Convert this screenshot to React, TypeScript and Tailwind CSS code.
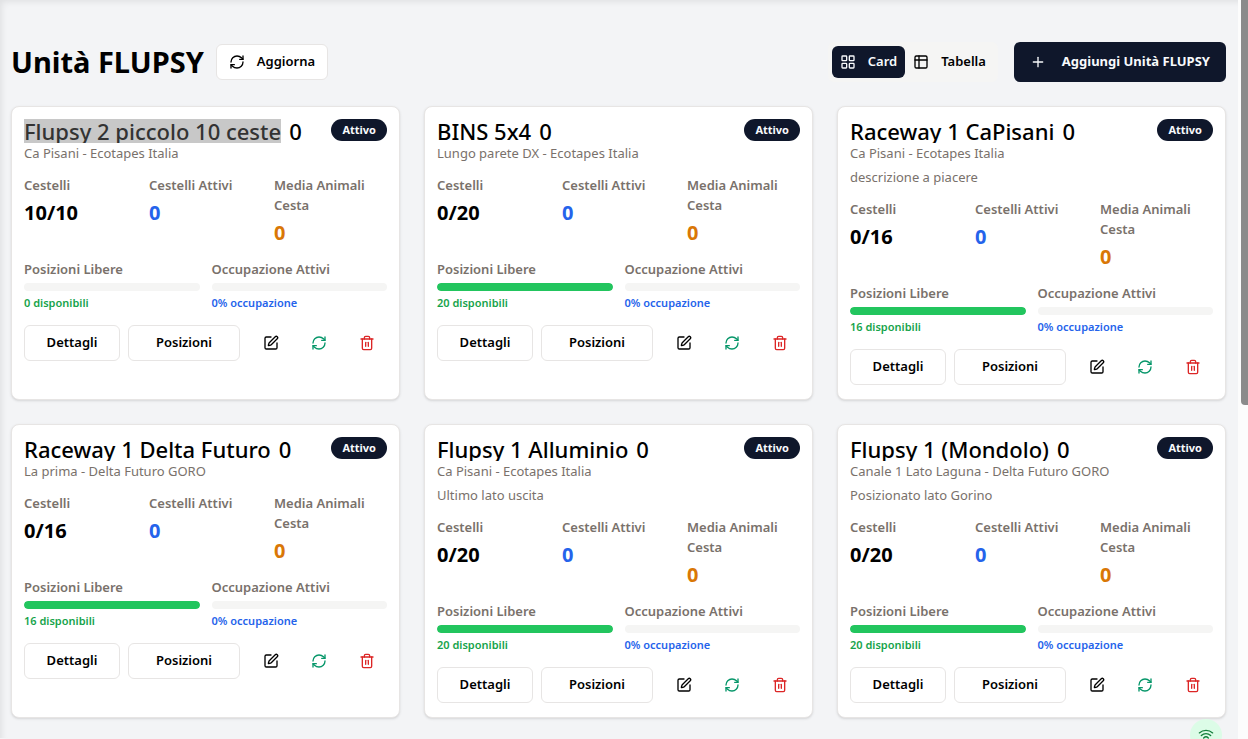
import { LayoutGrid, Plus, RefreshCw, SquarePen, Trash2, Wifi } from "lucide-react";

type Unit = {
  name: string;
  place: string;
  note?: string;
  used: number;
  total: number;
  free: number;
  selected?: boolean;
};

const units: Unit[] = [
  { name: "Flupsy 2 piccolo 10 ceste", place: "Ca Pisani - Ecotapes Italia", used: 10, total: 10, free: 0, selected: true },
  { name: "BINS 5x4", place: "Lungo parete DX - Ecotapes Italia", used: 0, total: 20, free: 20 },
  { name: "Raceway 1 CaPisani", place: "Ca Pisani - Ecotapes Italia", note: "descrizione a piacere", used: 0, total: 16, free: 16 },
  { name: "Raceway 1 Delta Futuro", place: "La prima - Delta Futuro GORO", used: 0, total: 16, free: 16 },
  { name: "Flupsy 1 Alluminio", place: "Ca Pisani - Ecotapes Italia", note: "Ultimo lato uscita", used: 0, total: 20, free: 20 },
  { name: "Flupsy 1 (Mondolo)", place: "Canale 1 Lato Laguna - Delta Futuro GORO", note: "Posizionato lato Gorino", used: 0, total: 20, free: 20 },
];

function TableIcon() {
  return (
    <svg width="16" height="16" viewBox="0 0 24 24" fill="none" stroke="currentColor" strokeWidth="2" strokeLinecap="round" strokeLinejoin="round" aria-hidden="true">
      <rect x="3" y="3" width="18" height="18" rx="2" />
      <path d="M3 9h18M9 3v18" />
    </svg>
  );
}

function Stat({ label, value, tone }: { label: string; value: string; tone: string }) {
  return (
    <div>
      <dt className="text-[13px] leading-5 font-semibold text-stone-500">{label}</dt>
      <dd className={`mt-1 text-xl leading-7 font-bold ${tone}`}>{value}</dd>
    </div>
  );
}

function Meter({ label, percent, caption, tone }: { label: string; percent: number; caption: string; tone: string }) {
  return (
    <div>
      <div className="text-[13px] leading-5 font-semibold text-stone-500">{label}</div>
      <div
        role="progressbar"
        aria-label={label}
        aria-valuenow={percent}
        className="mt-1 h-2 overflow-hidden rounded-full bg-stone-100"
      >
        <div className="h-full rounded-full bg-[#22c55e]" style={{ width: `${percent}%` }} />
      </div>
      <div className={`mt-1 text-[11px] leading-4 font-semibold ${tone}`}>{caption}</div>
    </div>
  );
}

function UnitCard({ unit }: { unit: Unit }) {
  return (
    <article className="rounded-lg border border-stone-200 bg-white px-3 pt-3 pb-3.5 shadow-sm">
      <header className="flex items-start justify-between gap-2">
        <div className="min-w-0">
          <h2 className="flex gap-2 overflow-hidden text-[22px] leading-6 font-medium whitespace-nowrap">
            <span className={unit.selected ? "bg-[#c8c8c8] text-[#333333]" : ""}>{unit.name}</span>
            <span>0</span>
          </h2>
          <p className="text-[13px] leading-5 whitespace-nowrap text-stone-500">{unit.place}</p>
          {unit.note && <p className="mt-1 text-[13px] leading-5 text-stone-500">{unit.note}</p>}
        </div>
        <span className="rounded-full bg-slate-900 px-[11px] py-[3px] text-[11px] leading-4 font-bold text-slate-50">
          Attivo
        </span>
      </header>
      <dl className="mt-3 grid grid-cols-3 gap-3">
        <Stat label="Cestelli" value={`${unit.used}/${unit.total}`} tone="text-black" />
        <Stat label="Cestelli Attivi" value="0" tone="text-[#2563eb]" />
        <Stat label="Media Animali Cesta" value="0" tone="text-[#d97706]" />
      </dl>
      <div className="mt-3 grid grid-cols-2 gap-3">
        <Meter label="Posizioni Libere" percent={unit.free > 0 ? 100 : 0} caption={`${unit.free} disponibili`} tone="text-[#16a34a]" />
        <Meter label="Occupazione Attivi" percent={0} caption="0% occupazione" tone="text-[#2563eb]" />
      </div>
      <footer className="mt-3.5 flex justify-between">
        <div className="flex gap-2">
          <button className="h-9 w-24 rounded-md border border-stone-200 bg-white text-[13px] font-semibold">Dettagli</button>
          <button className="h-9 w-28 rounded-md border border-stone-200 bg-white text-[13px] font-semibold">Posizioni</button>
        </div>
        <div className="flex gap-2">
          <button aria-label="Modifica" className="flex h-9 w-10 items-center justify-center">
            <SquarePen size={16} />
          </button>
          <button aria-label="Aggiorna unità" className="flex h-9 w-10 items-center justify-center text-[#059669]">
            <RefreshCw size={16} />
          </button>
          <button aria-label="Elimina" className="flex h-9 w-10 items-center justify-center text-[#dc2626]">
            <Trash2 size={16} />
          </button>
        </div>
      </footer>
    </article>
  );
}

export default function App() {
  return (
    <div className="min-h-screen overflow-hidden bg-[#f3f4f6] pr-2.5 font-['Noto_Sans','Open_Sans',sans-serif] text-black">
      <main className="px-3 pt-[42px] pb-5 pl-[11px] shadow-[inset_4px_4px_6px_-2px_rgba(0,0,0,0.08)]">
        <div className="mb-6 flex items-center justify-between">
          <div className="flex items-center gap-3">
            <h1 className="text-[29px] leading-9 font-bold whitespace-nowrap">Unità FLUPSY</h1>
            <button className="flex h-9 items-center gap-3 rounded-md border border-stone-200 bg-white px-3 text-[13px] font-semibold">
              <RefreshCw size={16} />
              Aggiorna
            </button>
          </div>
          <div className="flex items-center gap-4">
            <div role="group" aria-label="Vista" className="flex h-10 items-center rounded-md bg-stone-100 p-1">
              <button aria-pressed="true" className="flex h-8 items-center gap-3 rounded-md bg-slate-900 px-2 text-[13px] font-semibold text-slate-50">
                <LayoutGrid size={16} />
                Card
              </button>
              <button aria-pressed="false" className="flex h-8 items-center gap-3 rounded-md px-2 text-[13px] font-semibold">
                <TableIcon />
                Tabella
              </button>
            </div>
            <button className="flex h-10 items-center gap-4 rounded-md bg-slate-900 px-4 text-[13px] font-bold text-slate-50">
              <Plus size={16} />
              Aggiungi Unità FLUPSY
            </button>
          </div>
        </div>
        <section aria-label="Unità" className="grid grid-cols-3 gap-6">
          {units.map((unit) => (
            <UnitCard key={unit.name} unit={unit} />
          ))}
        </section>
      </main>
      <div aria-hidden="true" className="fixed top-0 right-0 h-full w-2.5 bg-[#fcfcfc] pl-[3px]">
        <div className="h-[405px] rounded-bl bg-[#8b8b8b]" />
      </div>
      <div role="status" aria-label="Connesso" className="fixed right-[26px] -bottom-3 flex size-8 items-center justify-center rounded-full bg-[#dcfce7] text-[#15803d]">
        <Wifi size={16} />
      </div>
    </div>
  );
}
